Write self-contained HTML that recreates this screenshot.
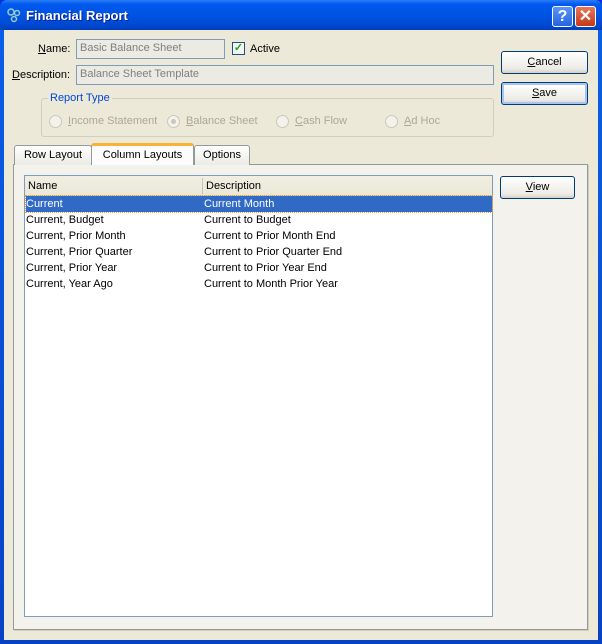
<!DOCTYPE html>
<html><head><style>
*{margin:0;padding:0;box-sizing:border-box}
body{width:602px;height:644px;overflow:hidden;font:11px "Liberation Sans",sans-serif;color:#000;background:#0831d9}
.a{position:absolute}
.win{left:0;top:0;width:602px;height:644px;background:linear-gradient(#0a5fe8,#0842c4);border-radius:7px 7px 0 0}
.title{left:0;top:0;width:602px;height:30px;background:linear-gradient(#2a7cf7 0%,#0058ee 15%,#0054e3 50%,#0048d0 85%,#003dbb 100%);border-radius:7px 7px 0 0}
.body{left:4px;top:30px;width:594px;height:610px;background:#ece9d8}
.inp{background:#ebeae3;border:1px solid #7f9db9;color:#808080;padding:2px 3px;height:20px}
.btn{border:1px solid #003c74;border-radius:3px;background:linear-gradient(#fff,#ecebe6 80%,#d6d0c5);text-align:center;line-height:20px;height:23px}
.rad{width:13px;height:13px;border-radius:50%;border:1px solid #cac8bb;background:#f3f2ec}
.dis{color:#aca899}
u{text-decoration:underline}
.row{left:1px;width:466px;height:16px;line-height:16px}
.row span{position:absolute;left:178px}
</style></head><body>
<div class="a win"></div>
<div class="a title"></div>
<svg class="a" style="left:6px;top:7px" width="16" height="16"><circle cx="5" cy="5" r="3" fill="none" stroke="#9cc" stroke-width="1.5"/><circle cx="11" cy="6" r="2.5" fill="none" stroke="#9cc" stroke-width="1.5"/><circle cx="8" cy="12" r="2.5" fill="none" stroke="#9cc" stroke-width="1.5"/></svg>
<div class="a" style="left:26px;top:8px;color:#fff;font-weight:bold;font-size:13px;text-shadow:1px 1px #0a1f8c">Financial Report</div>
<div class="a" style="left:552px;top:6px;width:21px;height:21px;border:1px solid #fff;border-radius:3px;background:linear-gradient(#5b95f6,#2563e0);color:#fff;font-weight:bold;font-size:16px;text-align:center;line-height:19px">?</div>
<div class="a" style="left:575px;top:6px;width:21px;height:21px;border:1px solid #fff;border-radius:3px;background:linear-gradient(#e8775a,#c4391a);color:#fff;font-weight:bold;font-size:16px;text-align:center;line-height:19px">✕</div>
<div class="a body"></div>

<div class="a" style="left:38px;top:43px"><u>N</u>ame:</div>
<div class="a inp" style="left:76px;top:39px;width:149px">Basic Balance Sheet</div>
<div class="a" style="left:232px;top:42px;width:13px;height:13px;border:1px solid #1c5180;background:#f4f4f0;color:#21a121;font-size:11px;line-height:11px;text-align:center;font-weight:bold">✓</div>
<div class="a" style="left:250px;top:43px">Active</div>
<div class="a" style="left:12px;top:69px"><u>D</u>escription:</div>
<div class="a inp" style="left:76px;top:65px;width:418px">Balance Sheet Template</div>

<div class="a" style="left:41px;top:98px;width:453px;height:39px;border:1px solid #d0d0bf;border-radius:3px"></div>
<div class="a" style="left:48px;top:92px;background:#ece9d8;color:#0046d5;padding:0 2px">Report Type</div>
<div class="a rad" style="left:49px;top:115px"></div><div class="a dis" style="left:68px;top:115px"><u>I</u>ncome Statement</div>
<div class="a rad" style="left:167px;top:115px"><div style="width:5px;height:5px;border-radius:50%;background:#cac8bb;margin:3px"></div></div><div class="a dis" style="left:186px;top:115px"><u>B</u>alance Sheet</div>
<div class="a rad" style="left:276px;top:115px"></div><div class="a dis" style="left:295px;top:115px"><u>C</u>ash Flow</div>
<div class="a rad" style="left:385px;top:115px"></div><div class="a dis" style="left:404px;top:115px"><u>A</u>d Hoc</div>

<div class="a btn" style="left:501px;top:51px;width:87px"><u>C</u>ancel</div>
<div class="a btn" style="left:501px;top:82px;width:87px;box-shadow:inset 0 0 0 2px #a8c4f0"><u>S</u>ave</div>

<div class="a" style="left:13px;top:164px;width:575px;height:466px;background:#f3f2ec;border:1px solid #919b9c;box-shadow:1px 1px 0 #d0cdb8"></div>
<div class="a" style="left:14px;top:145px;width:78px;height:20px;border:1px solid #919b9c;border-bottom:none;border-radius:3px 3px 0 0;background:linear-gradient(#fff,#ecebe5);text-align:center;line-height:19px">Row Layout</div>
<div class="a" style="left:194px;top:145px;width:56px;height:20px;border:1px solid #919b9c;border-bottom:none;border-radius:3px 3px 0 0;background:linear-gradient(#fff,#ecebe5);text-align:center;line-height:19px">Options</div>
<div class="a" style="left:91px;top:143px;width:103px;height:22px;border:1px solid #919b9c;border-top:3px solid #f8b330;border-bottom:none;border-radius:3px 3px 0 0;background:#fcfcfe;text-align:center;line-height:18px">Column Layouts</div>

<div class="a" style="left:24px;top:175px;width:469px;height:442px;background:#fff;border:1px solid #7f9db9">
<div class="a" style="left:0;top:0;width:467px;height:20px;background:linear-gradient(#f1efe2,#ebe8d8);border-bottom:1px solid #d6d2c2"></div>
<div class="a" style="left:3px;top:4px">Name</div>
<div class="a" style="left:177px;top:2px;width:1px;height:16px;background:#c7c5b2"></div>
<div class="a" style="left:181px;top:4px">Description</div>
<div class="a row" style="top:20px;background:#316ac5;color:#fff;outline:1px dotted #e8a040">Current<span>Current Month</span></div>
<div class="a row" style="top:36px">Current, Budget<span>Current to Budget</span></div>
<div class="a row" style="top:52px">Current, Prior Month<span>Current to Prior Month End</span></div>
<div class="a row" style="top:68px">Current, Prior Quarter<span>Current to Prior Quarter End</span></div>
<div class="a row" style="top:84px">Current, Prior Year<span>Current to Prior Year End</span></div>
<div class="a row" style="top:100px">Current, Year Ago<span>Current to Month Prior Year</span></div>
</div>
<div class="a btn" style="left:500px;top:176px;width:75px"><u>V</u>iew</div>
</body></html>
